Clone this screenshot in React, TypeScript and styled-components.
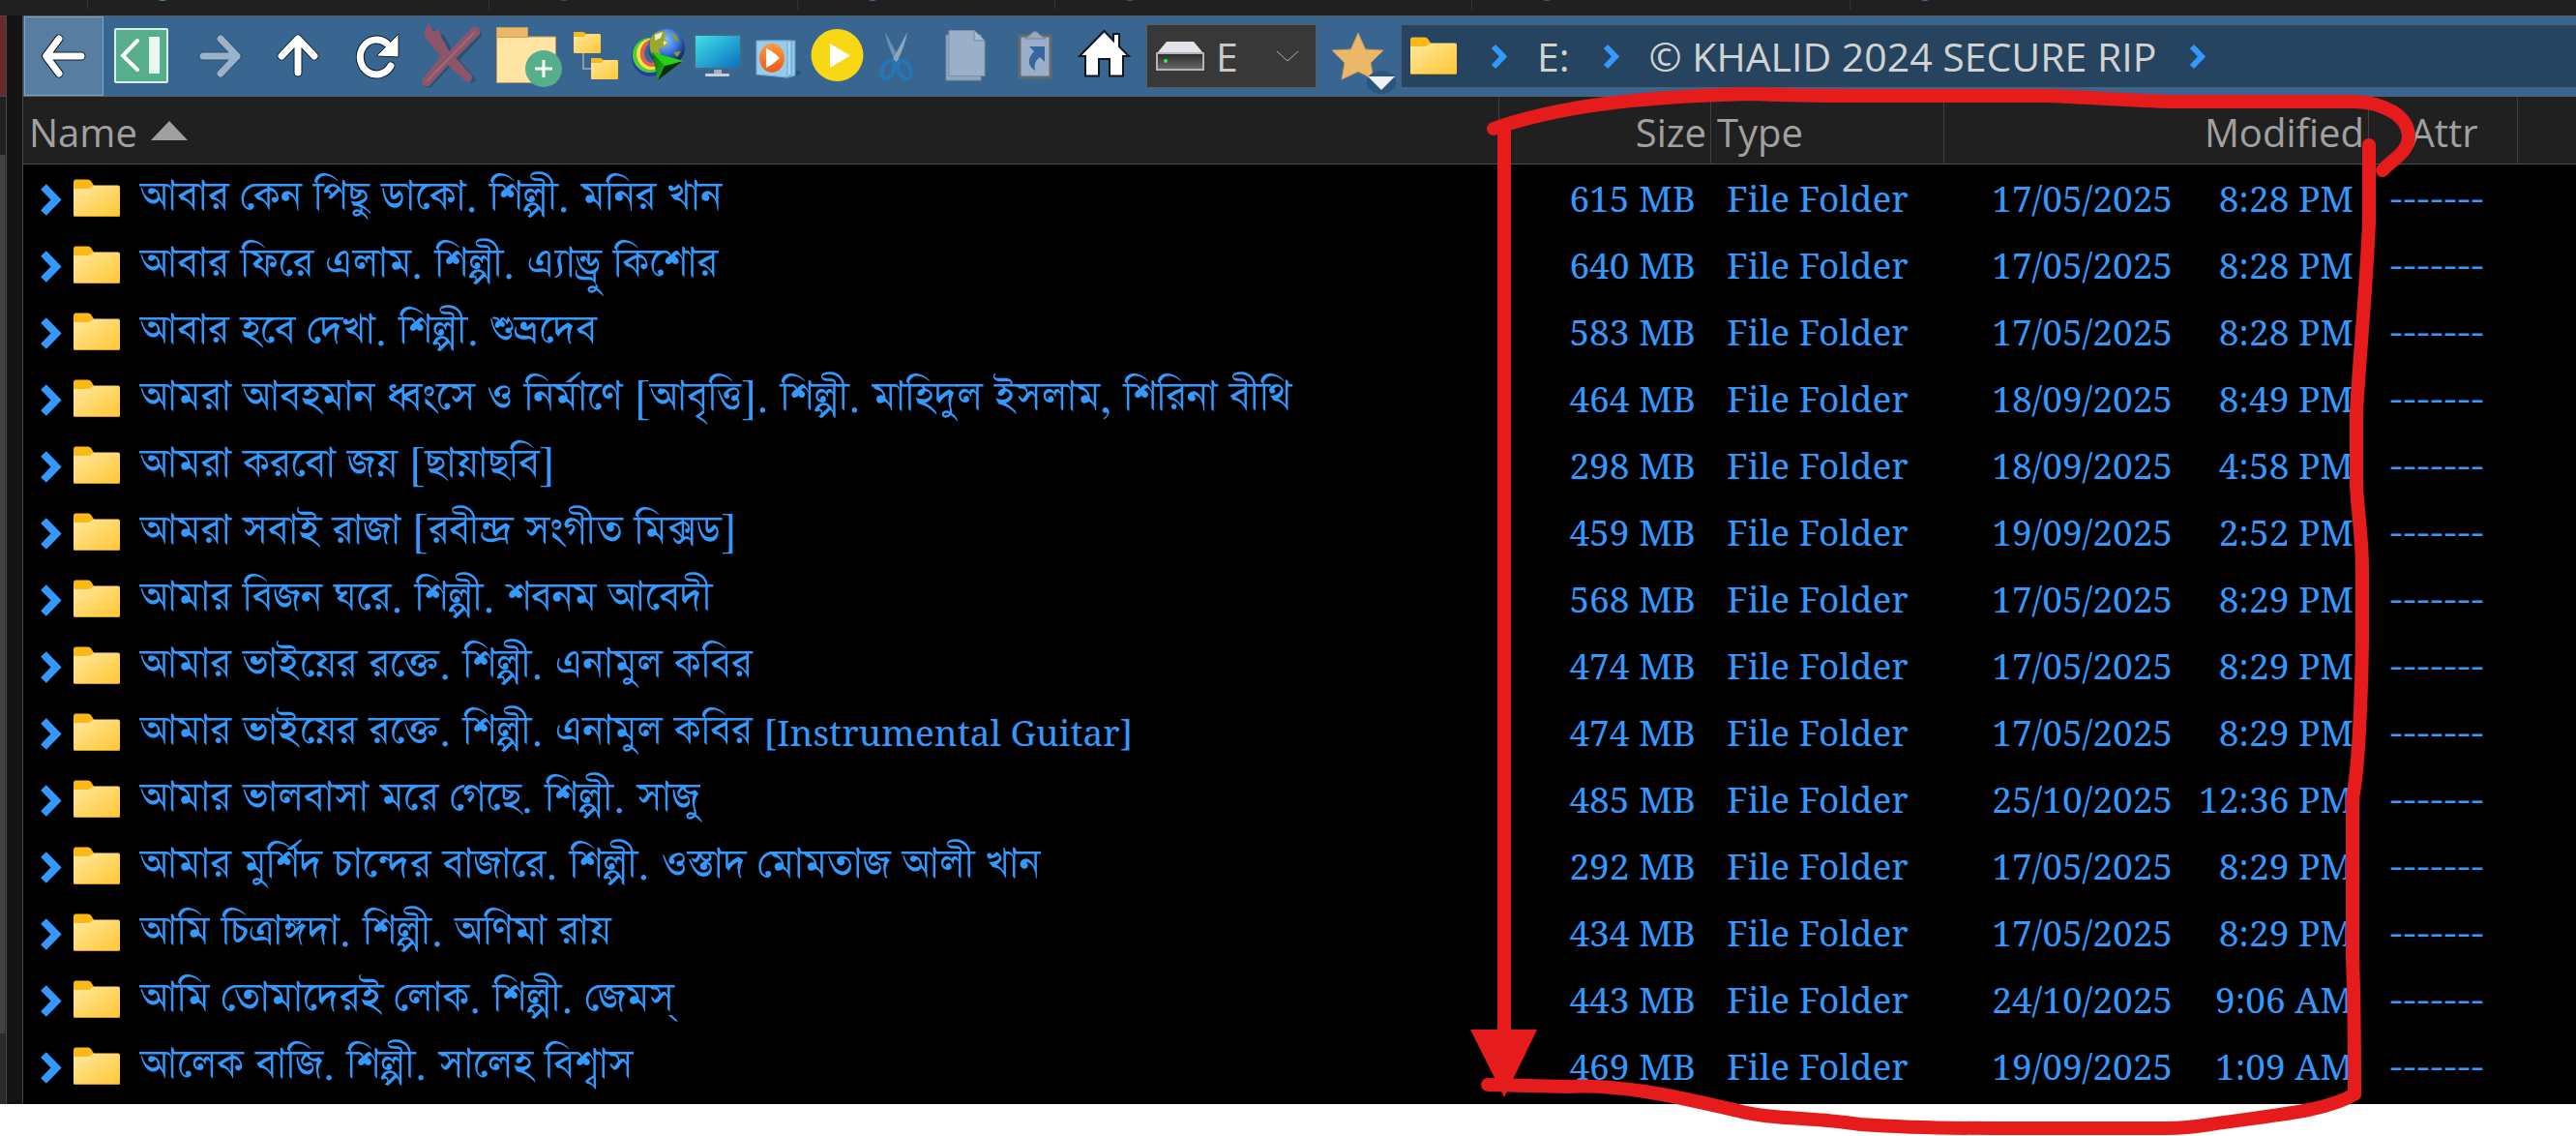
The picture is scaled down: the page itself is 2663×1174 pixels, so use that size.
import React from "react";
import styled, { createGlobalStyle } from "styled-components";

const uiFont = `"Segoe UI", "Open Sans", "Noto Sans", sans-serif`;
const listFont = `"Noto Serif", "Liberation Serif", serif`;
const bengaliFont = `"FreeSerif", "Noto Serif Bengali", "Noto Serif", serif`;

const Global = createGlobalStyle`
  * { box-sizing: border-box; }
  html, body { margin: 0; background: #fff; }
  button, select { font: inherit; color: inherit; margin: 0; padding: 0; border: 0; background: none; }
  svg { display: block; overflow: visible; flex: none; }
`;

const Page = styled.div`
  position: relative;
  overflow: hidden;
  padding-bottom: 33px;
`;
const TabEdge = styled.header`
  display: flex;
  height: 16px;
  padding-left: 90px;
  background: #202020;
  overflow: hidden;
`;
const TabStub = styled.span<{ $color: string; $w: number }>`
  flex: 0 0 ${(p) => p.$w}px;
  height: 10px;
  border-left: 1px solid #333;
  &::before {
    content: "";
    display: block;
    width: 12px;
    height: 8px;
    margin: -7px 0 0 71px;
    border-radius: 50%;
    background: ${(p) => p.$color};
  }
`;
const Body = styled.div`
  display: flex;
`;
const TreePane = styled.aside`
  display: flex;
  flex-direction: column;
  flex: 0 0 7px;
  border-right: 1px solid #4a4a4a;
  background: #2b2b2b;
`;
const TreeHead = styled.div`
  height: 84px;
  border-top: 1px solid #4a4a4a;
  border-bottom: 1px solid #4a4a4a;
  background: #682a2c;
`;
const TreeGap = styled.div`
  height: 60px;
  background: #202020;
`;
const TreeThumb = styled.div`
  width: 5px;
  flex: 0 1 908px;
  background: #424242;
`;
const Splitter = styled.div`
  flex: 0 0 17px;
  border-right: 1px solid #444;
  background: #141414;
`;
const Lister = styled.main`
  flex: 1;
  min-width: 0;
  padding-bottom: 5px;
  background: #000;
`;
const Toolbar = styled.nav`
  display: flex;
  align-items: center;
  height: 84px;
  padding-left: 1px;
  border-top: 1px solid #56616a;
  border-bottom: 1px solid #56616a;
  background: #386690;
`;
const Tool = styled.button<{ $gap?: number }>`
  flex: none;
  margin-left: ${(p) => p.$gap ?? 0}px;
`;
const BackTool = styled(Tool)`
  width: 82px;
  height: 82px;
  border: 1px solid #86a5c3;
  background: #577da1;
  svg { margin: -1px; }
`;
const DriveBox = styled.label`
  display: flex;
  align-items: center;
  flex: 0 0 176px;
  height: 66px;
  margin-left: 17px;
  padding: 0 17px 0 9px;
  border: 1px solid #5e5c58;
  background: #383838;
`;
const DriveSelect = styled.select`
  flex: 1;
  min-width: 0;
  padding-left: 12px;
  appearance: none;
  color: #c8c8c8;
  font: 41px/60px ${uiFont};
`;
const PathField = styled.div`
  display: flex;
  align-items: center;
  flex: 1;
  min-width: 0;
  height: 66px;
  margin-left: 5px;
  padding-left: 8px;
  border: 1px solid #4d6072;
  border-right: 0;
  background: #26445f;
  color: #d2d2d2;
  font: 41px/60px ${uiFont};
  white-space: nowrap;
`;
const Crumb = styled.a`
  margin: 0 34px 0 30px;
  color: inherit;
  text-decoration: none;
`;
const RootIcon = styled.a`
  margin-right: 34px;
`;

const Table = styled.table`
  width: 100%;
  table-layout: fixed;
  border-collapse: separate;
  border-spacing: 0;
`;
const Col = styled.col<{ $w?: number }>`
  width: ${(p) => (p.$w ? `${p.$w}px` : "auto")};
`;
const Th = styled.th<{ $align?: string }>`
  height: 70px;
  padding: 5px 4px 0 6px;
  border-right: 1px solid #404040;
  border-bottom: 1px solid #4a4a4a;
  background: #202020;
  color: #a0a0a0;
  font: 40px/60px ${uiFont};
  text-align: ${(p) => p.$align ?? "left"};
  white-space: nowrap;
  &:last-child { border-right: 0; }
`;
const SortButton = styled.button`
  display: inline-flex;
  align-items: center;
  gap: 14px;
  svg { margin-bottom: 5px; }
`;
const Row = styled.tr`
  height: 69px;
  color: #3399ff;
`;
const Td = styled.td<{ $align?: string }>`
  height: 69px;
  padding: 0 16px;
  font: 37px/69px ${listFont};
  text-align: ${(p) => p.$align ?? "left"};
  white-space: nowrap;
`;
const AttrTd = styled(Td)`
  padding: 0 21px;
  font: 42px/69px ${bengaliFont};
`;
const Entry = styled.div`
  display: flex;
  align-items: center;
  height: 69px;
  padding-left: 2px;
`;
const Expand = styled.button`
  margin-right: 12px;
  padding-top: 4px;
`;
const EntryName = styled.span`
  padding-left: 20px;
  font: 49px/68px ${bengaliFont};
`;
const LatinPart = styled.span`
  font: 37px/64px ${listFont};
`;
const Stamp = styled.div`
  display: flex;
  justify-content: flex-end;
`;
const Clock = styled.span`
  min-width: 187px;
  text-align: right;
`;
const Markup = styled.svg`
  position: absolute;
  inset: 0;
  width: 100%;
  height: auto;
  pointer-events: none;
`;

const Ico = ({ w, children }: { w: number; children: React.ReactNode }) => (
  <svg width={w} height={82} viewBox={`0 0 ${w} 82`} aria-hidden="true">{children}</svg>
);
const outline = { fill: "none", strokeLinecap: "round", strokeLinejoin: "round" } as const;
const Arrow = ({ d, faded }: { d: string; faded?: boolean }) => (
  <g {...outline}>
    <path d={d} stroke={faded ? "#2c5072" : "#141c24"} strokeWidth="9" />
    <path d={d} stroke={faded ? "#9bb2c8" : "#fff"} strokeWidth="7" />
  </g>
);

const Gradients = () => (
  <svg width="0" height="0" aria-hidden="true">
    <defs>
      <linearGradient id="folder" x1="0" y1="0" x2="1" y2="1">
        <stop offset="0" stopColor="#ffe8a0" /><stop offset="1" stopColor="#ffc732" />
      </linearGradient>
      <linearGradient id="screen" x1="0" y1="0" x2="1" y2="1">
        <stop offset="0" stopColor="#40e4ea" /><stop offset="1" stopColor="#0a6cbd" />
      </linearGradient>
      <radialGradient id="globe" cx=".45" cy=".3" r=".7">
        <stop offset="0" stopColor="#8cc6ff" /><stop offset=".5" stopColor="#3a78e0" /><stop offset="1" stopColor="#0d1a40" />
      </radialGradient>
      <linearGradient id="dart" x1="0" y1="0" x2="1" y2=".3">
        <stop offset="0" stopColor="#0a6a08" /><stop offset="1" stopColor="#2fe81c" />
      </linearGradient>
      <linearGradient id="disc" x1="0" y1="0" x2="0" y2="1">
        <stop offset="0" stopColor="#ff9a3c" /><stop offset="1" stopColor="#ee5a1c" />
      </linearGradient>
      <linearGradient id="drive" x1="0" y1="0" x2="0" y2="1">
        <stop offset="0" stopColor="#2a2a2a" /><stop offset="1" stopColor="#6a6a6a" />
      </linearGradient>
    </defs>
  </svg>
);

const Folder = () => (
  <svg width="50" height="40" viewBox="0 0 50 40" aria-hidden="true">
    <path d="M1 9H16Q18 9 20 6.500H47Q49 6.500 49 8.500V37Q49 39 47 39H3Q1 39 1 37Z" fill="url(#folder)" />
    <path d="M1 3V10H15Q18 10 22 6.500L19 2Q18 .5 16 .5H3Q1 .5 1 3Z" fill="#fbb917" />
    <path d="M1.500 38.500H48.500" stroke="#d89a20" />
  </svg>
);
const Chevron = ({ w = 18, h = 27, sw = 6 }: { w?: number; h?: number; sw?: number }) => (
  <svg width={w} height={h} viewBox={`0 0 ${w} ${h}`} aria-hidden="true">
    <path d={`M3 3L${w - 5} ${h / 2}L3 ${h - 3}`} fill="none" stroke="#3399ff" strokeWidth={sw} />
  </svg>
);

const rows: [string, string, string, string, string?][] = [
  ["আবার কেন পিছু ডাকো. শিল্পী. মনির খান", "615 MB", "17/05/2025", "8:28 PM"],
  ["আবার ফিরে এলাম. শিল্পী. এ্যান্ড্রু কিশোর", "640 MB", "17/05/2025", "8:28 PM"],
  ["আবার হবে দেখা. শিল্পী. শুভ্রদেব", "583 MB", "17/05/2025", "8:28 PM"],
  ["আমরা আবহমান ধ্বংসে ও নির্মাণে [আবৃত্তি]. শিল্পী. মাহিদুল ইসলাম, শিরিনা বীথি", "464 MB", "18/09/2025", "8:49 PM"],
  ["আমরা করবো জয় [ছায়াছবি]", "298 MB", "18/09/2025", "4:58 PM"],
  ["আমরা সবাই রাজা [রবীন্দ্র সংগীত মিক্সড]", "459 MB", "19/09/2025", "2:52 PM"],
  ["আমার বিজন ঘরে. শিল্পী. শবনম আবেদী", "568 MB", "17/05/2025", "8:29 PM"],
  ["আমার ভাইয়ের রক্তে. শিল্পী. এনামুল কবির", "474 MB", "17/05/2025", "8:29 PM"],
  ["আমার ভাইয়ের রক্তে. শিল্পী. এনামুল কবির ", "474 MB", "17/05/2025", "8:29 PM", "[Instrumental Guitar]"],
  ["আমার ভালবাসা মরে গেছে. শিল্পী. সাজু", "485 MB", "25/10/2025", "12:36 PM"],
  ["আমার মুর্শিদ চান্দের বাজারে. শিল্পী. ওস্তাদ মোমতাজ আলী খান", "292 MB", "17/05/2025", "8:29 PM"],
  ["আমি চিত্রাঙ্গদা. শিল্পী. অণিমা রায়", "434 MB", "17/05/2025", "8:29 PM"],
  ["আমি তোমাদেরই লোক. শিল্পী. জেমস্", "443 MB", "24/10/2025", "9:06 AM"],
  ["আলেক বাজি. শিল্পী. সালেহ বিশ্বাস", "469 MB", "19/09/2025", "1:09 AM"],
];
const tabs: [string, number][] = [
  ["#3f9f78", 415], ["#7c3a30", 319], ["#3a74b8", 266], ["#2f6a58", 431], ["#345c90", 391], ["#3a74b8", 400],
];

export default function App() {
  return (
    <Page>
      <Global />
      <Gradients />
      <TabEdge>{tabs.map(([color, w], i) => <TabStub key={i} $color={color} $w={w} />)}</TabEdge>
      <Body>
        <TreePane><TreeHead /><TreeGap /><TreeThumb /></TreePane>
        <Splitter />
        <Lister>
          <Toolbar aria-label="Toolbar">
            <BackTool aria-label="Back"><Ico w={82}><Arrow d="M59 41H24M36 23L22.500 41L36 59" /></Ico></BackTool>
            <Tool $gap={11} aria-label="Toggle tree">
              <Ico w={56}>
                <rect x="1" y="13" width="54" height="55" rx="1" fill="#56ae8a" stroke="#d8f0e4" strokeWidth="2" />
                <path d="M24 25L9 40.500L24 55" fill="none" stroke="#fff" strokeWidth="4" strokeLinecap="round" />
                <rect x="36" y="21" width="11" height="38" fill="#eaf8f2" />
              </Ico>
            </Tool>
            <Tool $gap={31} aria-label="Forward"><Ico w={45}><Arrow faded d="M5 41H40M23 23L40 41L23 59" /></Ico></Tool>
            <Tool $gap={36} aria-label="Up"><Ico w={44}><Arrow d="M22 58V24M5 41L22 23L39 41" /></Ico></Tool>
            <Tool $gap={37} aria-label="Refresh">
              <Ico w={46}>
                <path d="M33 28A17 18 0 1 0 37 51" {...outline} stroke="#141c24" strokeWidth="9" />
                <path d="M22 41L45 18V42Z" fill="#fff" stroke="#141c24" strokeWidth="1" />
                <path d="M33 28A17 18 0 1 0 37 51" {...outline} stroke="#fff" strokeWidth="7" />
              </Ico>
            </Tool>
            <Tool $gap={22} aria-label="Delete">
              <Ico w={64}>
                <path d="M10 10L14 17L20 16L24 22L31 36L54 12Q60 12 60 18L37 43L54 63Q52 68 48 66L29 48L8 71Q1 73 1 67L23 41L8 22L5 18Z" fill="#2c5175" transform="translate(3 2)" />
                <path d="M8 9L12 16L18 15L20 21L29 38L54 12Q61 11 60 18L35 43L52 62Q52 68 47 66L28 49L8 71Q1 72 2 66L22 41L8 25L4 18Z" fill="#8d5569" stroke="#8d5569" strokeWidth="2" />
                <path d="M6 67L56 16" fill="none" stroke="#a0687c" strokeWidth="2" />
              </Ico>
            </Tool>
            <Tool $gap={14} aria-label="New folder">
              <Ico w={68}>
                <path d="M.5 12.500H32.500V21H61.500V68.500H.5Z" fill="#ffe4a4" stroke="#cc9c58" />
                <path d="M.5 11.500H32.500V21.500H.5Z" fill="#ebb768" stroke="#cc9c58" />
                <circle cx="49" cy="54" r="19" fill="#56ae8a" />
                <path d="M49 45V63M40 54H58" stroke="#fff" strokeWidth="3" />
              </Ico>
            </Tool>
            <Tool $gap={11} aria-label="Folder tree">
              <Ico w={47}>
                <path d="M11 38V54H20" fill="none" stroke="#8f9aa4" strokeWidth="2" />
                <rect x="1" y="18" width="28" height="20" rx="1" fill="url(#folder)" />
                <path d="M1 16H11L14 18L12 21H1Z" fill="#fbb917" />
                <rect x="19" y="45" width="28" height="20" rx="1" fill="url(#folder)" />
                <path d="M19 43H29L32 45L30 48H19Z" fill="#fbb917" />
              </Ico>
            </Tool>
            <Tool $gap={13} aria-label="Download manager">
              <Ico w={57}>
                <g fill="none" strokeWidth="4">
                  <ellipse cx="20" cy="42" rx="17" ry="18" stroke="#263aa8" />
                  <ellipse cx="20" cy="40" rx="16" ry="16" stroke="#4fd02c" />
                  <ellipse cx="21" cy="39" rx="13" ry="14" stroke="#f6e44a" />
                  <ellipse cx="22" cy="38" rx="10" ry="12" stroke="#e4604c" />
                </g>
                <circle cx="37" cy="32" r="19" fill="url(#globe)" />
                <path d="M20 24Q24 15 33 15L38 18L34 22L39 27L34 32L29 33L31 40L27 46Q18 38 20 24Z" fill="#9aa82c" />
                <path d="M25 19L33 16L31 22L25 25ZM34 25L38 27L34 30Z" fill="#e8ecd0" />
                <path d="M42 16L48 20L50 27L44 23ZM44 37L52 36L48 42Z" fill="#8a9a38" />
                <path d="M22 37L54 46L28 66Z" fill="url(#dart)" />
                <path d="M28 66L35 51L54 46Z" fill="#0c2c06" />
                <path d="M22 37L54 46L35 51Z" fill="#24d414" />
              </Ico>
            </Tool>
            <Tool $gap={8} aria-label="This PC">
              <Ico w={50}>
                <path d="M21 53H29V61H34V62H16V61H21Z" fill="#a8b0b8" />
                <rect x="12" y="59" width="25" height="3" rx="1" fill="#c8d0d6" />
                <rect x="1" y="19" width="48" height="35" rx="1" fill="url(#screen)" stroke="#47687e" strokeWidth="2" />
              </Ico>
            </Tool>
            <Tool $gap={14} aria-label="Media library">
              <Ico w={48}>
                <path d="M41 62L48 58L42 55Z" fill="#29506f" />
                <path d="M10 25H41V61L34 63L10 60Z" fill="#8cc6e8" stroke="#5f9dc8" />
                <path d="M6 25H37V60L33 63L6 60Z" fill="#a9d6f0" stroke="#5f9dc8" />
                <path d="M1 25H33V63L1 60Z" fill="#98cdea" stroke="#6aa8d2" />
                <ellipse cx="17" cy="43" rx="13" ry="15" fill="url(#disc)" />
                <path d="M11 33V53Q19 49 25 43Q18 36 11 33Z" fill="#fff" />
              </Ico>
            </Tool>
            <Tool $gap={10} aria-label="Play">
              <Ico w={53}><circle cx="26.500" cy="40" r="27" fill="#f8d814" /><path d="M19 28V53L40 40.500Z" fill="#fff" /></Ico>
            </Tool>
            <Tool $gap={17} aria-label="Cut">
              <Ico w={35}>
                <path d="M6 16L21 44L17 47Q8 30 6 16Z" fill="#6d8fae" />
                <path d="M29 16L14 44L18 47Q27 30 29 16Z" fill="#8ba6be" />
                <g fill="none" stroke="#2476b4" strokeWidth="4">
                  <ellipse cx="9" cy="55" rx="6" ry="10" transform="rotate(22 9 55)" />
                  <ellipse cx="26" cy="55" rx="6" ry="10" transform="rotate(-22 26 55)" />
                </g>
              </Ico>
            </Tool>
            <Tool $gap={33} aria-label="Copy">
              <Ico w={42}>
                <path d="M1 19H37V66H1Z" fill="#8fa8c0" stroke="#7890a8" />
                <path d="M4 14.500H30L41 25V61.500H4Z" fill="#9bb0c8" stroke="#7890a8" />
                <path d="M30 14.500V25H41" fill="#a8bacd" stroke="#6f88a2" />
              </Ico>
            </Tool>
            <Tool $gap={33} aria-label="Paste shortcut">
              <Ico w={36}>
                <rect x="2" y="20" width="32" height="43" fill="#9bb0c8" stroke="#646a70" strokeWidth="3" />
                <path d="M7 23L13 19Q18 12 23 19L29 23Z" fill="#9aaabb" stroke="#72849a" />
                <path d="M12 31H28V47L23 42Q16 47 18 56Q6 48 17 36Z" fill="#36669c" />
              </Ico>
            </Tool>
            <Tool $gap={27} aria-label="Home">
              <Ico w={53}>
                <path d="M26.500 15L36 25V18H42V31L52 41H46V61.500H32V44H21V61.500H7V41H1Z" fill="#fff" stroke="#10161c" strokeWidth="2" />
              </Ico>
            </Tool>
            <DriveBox>
              <svg width="50" height="30" viewBox="0 0 50 30" aria-hidden="true">
                <path d="M1 12L11 0H39L49 12Z" fill="#e2e2e8" />
                <rect x="1" y="12" width="48" height="17" fill="url(#drive)" stroke="#b4b4b8" strokeWidth="2" />
                <circle cx="10" cy="20" r="2" fill="#32f032" />
              </svg>
              <DriveSelect aria-label="Drive" defaultValue="E"><option>E</option></DriveSelect>
              <svg width="24" height="12" viewBox="0 0 24 12" aria-hidden="true">
                <path d="M1 1L12 11L23 1" fill="none" stroke="#b0b0b0" strokeWidth="1" />
              </svg>
            </DriveBox>
            <Tool $gap={16} aria-label="Favorites">
              <Ico w={66}>
                <path d="M27 17L34.500 34L53 35L40 48L43 65L27 57L10 65L13 48L0 35L19.500 34Z" fill="#ebb768" stroke="#c79a58" />
                <ellipse cx="51" cy="68" rx="15" ry="12" fill="#2c557e" />
                <path d="M37 62H65L51 76Z" fill="#f0f0f0" />
              </Ico>
            </Tool>
            <PathField>
              <RootIcon href="#root" aria-label="Root"><Folder /></RootIcon>
              <Chevron />
              <Crumb href="#e">E:</Crumb>
              <Chevron />
              <Crumb href="#khalid">© KHALID 2024 SECURE RIP</Crumb>
              <Chevron />
            </PathField>
          </Toolbar>
          <Table>
            <colgroup><Col /><Col $w={219} /><Col $w={241} /><Col $w={439} /><Col $w={154} /><Col $w={60} /></colgroup>
            <thead>
              <tr>
                <Th>
                  <SortButton>
                    Name
                    <svg width="38" height="20" viewBox="0 0 38 20" aria-hidden="true"><path d="M19 0L38 20H0Z" fill="#a0a0a0" /></svg>
                  </SortButton>
                </Th>
                <Th $align="right">Size</Th><Th>Type</Th><Th $align="right">Modified</Th><Th $align="center">Attr</Th><Th aria-hidden="true" />
              </tr>
            </thead>
            <tbody>
              {rows.map(([name, size, date, time, latin]) => (
                <Row key={name}>
                  <Td>
                    <Entry>
                      <Expand aria-label="Expand"><Chevron w={21} h={33} sw={8} /></Expand>
                      <Folder />
                      <EntryName>{name}{latin && <LatinPart>{latin}</LatinPart>}</EntryName>
                    </Entry>
                  </Td>
                  <Td $align="right">{size}</Td>
                  <Td>File Folder</Td>
                  <Td $align="right"><Stamp><span>{date}</span><Clock>{time}</Clock></Stamp></Td>
                  <AttrTd>-------</AttrTd>
                  <Td />
                </Row>
              ))}
            </tbody>
          </Table>
        </Lister>
      </Body>
      <Markup viewBox="0 0 2663 1174" aria-hidden="true">
        <g fill="none" stroke="#e61c1c" strokeWidth="14" strokeLinecap="round" strokeLinejoin="round">
          <path d="M1544 133C1610 110 1690 100 1811 97Q1860 99 1917 99H2117C2170 101 2200 104 2246 105H2434C2462 106 2490 118 2490 142C2489 158 2474 164 2463 176" />
          <path d="M2449 150V230C2446 300 2440 360 2436 425V500C2437 530 2442 550 2442 590V665C2441 720 2439 790 2432 825V990Q2434 1040 2434 1131C2400 1150 2350 1152 2285 1162Q2260 1166 2240 1166H2060Q1980 1166 1923 1162C1870 1154 1830 1157 1797 1148C1740 1135 1680 1120 1620 1123L1538 1121" />
          <path d="M1555 133V1070" strokeLinecap="butt" />
        </g>
        <path d="M1520 1064H1589L1555 1134Z" fill="#e61c1c" />
      </Markup>
    </Page>
  );
}
